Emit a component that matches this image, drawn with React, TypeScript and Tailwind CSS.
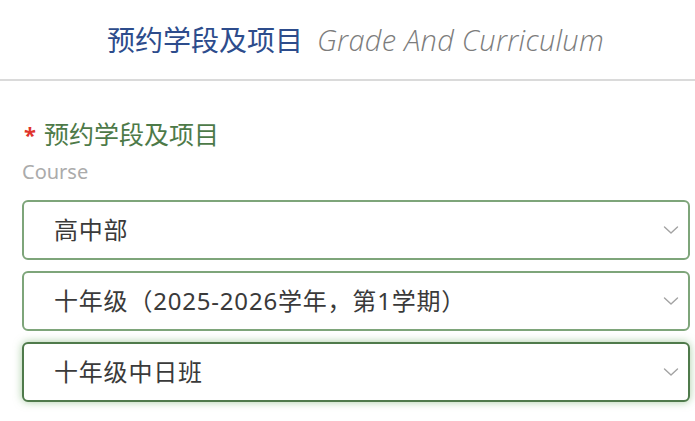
const options = [
  { value: '高中部', focused: false },
  { value: '十年级（2025-2026学年，第1学期）', focused: false },
  { value: '十年级中日班', focused: true },
];

function Chevron() {
  return (
    <svg width="16" height="10" viewBox="0 0 16 10" fill="none" className="shrink-0">
      <path d="M1.5 2 L8 8 L14.5 2" stroke="#a3a3a3" strokeWidth="1.4" strokeLinecap="round" strokeLinejoin="round" />
    </svg>
  );
}

function SelectBox({ value, focused }: { value: string; focused: boolean }) {
  return (
    <div
      className={
        focused
          ? 'flex h-[60px] items-center justify-between rounded-md border-2 border-[#4f7a4b] bg-white pl-[30px] pr-[9px] shadow-[0_0_9px_rgba(110,170,100,0.6)]'
          : 'flex h-[60px] items-center justify-between rounded-md border-2 border-[#7ea57a] bg-white pl-[30px] pr-[9px]'
      }
    >
      <span className="text-[24px] tracking-[0.8px] text-[#3a3a3a]">{value}</span>
      <Chevron />
    </div>
  );
}

export default function App() {
  return (
    <div className="h-[421px] w-[695px] overflow-hidden bg-white font-['Noto_Sans','Noto_Sans_CJK_SC',sans-serif]">
      {/* Header */}
      <div className="flex h-[81px] items-center justify-center gap-[14px] border-b-2 border-[#dadada] pl-[16px]">
        <span className="text-[28px] text-[#2d4c8c]">预约学段及项目</span>
        <span className="font-['Open_Sans',sans-serif] text-[29px] font-light italic tracking-[0.3px] text-[#7c7c7c]">
          Grade And Curriculum
        </span>
      </div>

      {/* Form field */}
      <div className="pl-[22px] pr-[5px] pt-[36px]">
        <div className="flex items-center gap-[8px] pl-[2px]">
          <span className="text-[22px] font-bold leading-none text-[#e0342b]">*</span>
          <span className="text-[25px] leading-[34px] text-[#4d7a48]">预约学段及项目</span>
        </div>
        <div className="mt-[7px] text-[20px] leading-[28px] text-[#ababab]">Course</div>
        <div className="mt-[14px] flex flex-col gap-[11px]">
          {options.map((o) => (
            <SelectBox key={o.value} value={o.value} focused={o.focused} />
          ))}
        </div>
      </div>
    </div>
  );
}
